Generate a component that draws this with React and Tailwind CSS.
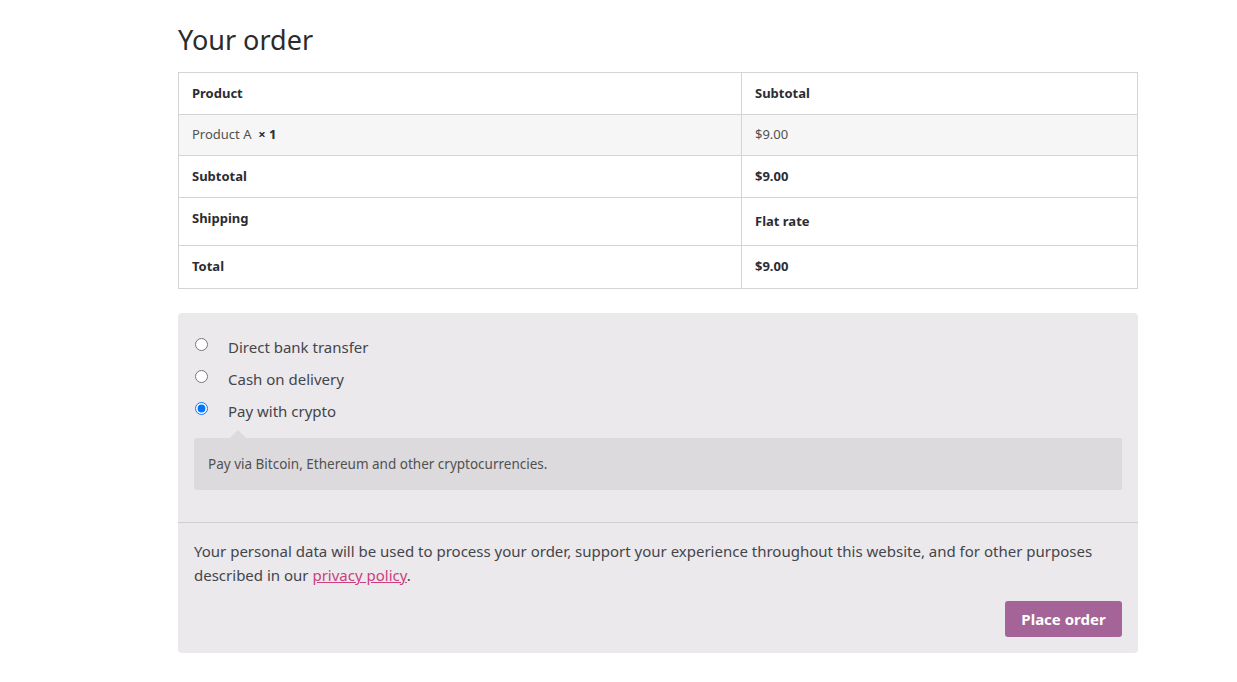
import { useState } from "react";

const rows = [
  { label: "Subtotal", value: "$9.00", h: "h-[42px]" },
  { label: "Shipping", value: "Flat rate", h: "h-[48px]", top: true },
  { label: "Total", value: "$9.00", h: "h-[43px]" },
];

const methods = ["Direct bank transfer", "Cash on delivery", "Pay with crypto"];

const App = () => {
  const [method, setMethod] = useState(2);

  return (
    <div className="min-h-screen bg-white text-[#43454b]" style={{ fontFamily: '"Noto Sans", "Open Sans", sans-serif' }}>
      <div className="w-[960px] ml-[178px] pt-[22px]">
        <h3 className="text-[27px] leading-[36px] text-[#2b2b2b] mb-[14px]">Your order</h3>

        {/* order table */}
        <table className="w-full border-collapse border border-[#d0d0d0] text-[13px] text-[#2c2d33]">
          <thead>
            <tr className="h-[42px]">
              <th className="w-[563px] text-left font-bold px-[13px] border border-[#d4d4d4]">Product</th>
              <th className="text-left font-bold px-[13px] border border-[#d4d4d4]">Subtotal</th>
            </tr>
          </thead>
          <tbody>
            <tr className="h-[41px] bg-[#f6f6f6] text-[#515151]">
              <td className="px-[13px] border border-[#d4d4d4]">
                Product A&nbsp; <strong className="text-[#2c2d33]">× 1</strong>
              </td>
              <td className="px-[13px] border border-[#d4d4d4]">$9.00</td>
            </tr>
          </tbody>
          <tfoot>
            {rows.map((r) => (
              <tr key={r.label} className={r.h}>
                <th className={r.top ? "text-left font-bold px-[13px] pt-[11px] align-top border border-[#d4d4d4]" : "text-left font-bold px-[13px] border border-[#d4d4d4]"}>
                  {r.label}
                </th>
                <td className="font-bold px-[13px] border border-[#d4d4d4]">{r.value}</td>
              </tr>
            ))}
          </tfoot>
        </table>

        {/* payment box */}
        <div className="mt-[24px] bg-[#ebe9eb] rounded-[4px]">
          <ul className="pt-[18px] px-[16px] pb-[32px] border-b border-[#d3ced2]">
            {methods.map((m, i) => (
              <li key={m}>
                <label className="flex items-center h-[32px] text-[15px] cursor-pointer">
                  <input
                    type="radio"
                    name="payment"
                    checked={method === i}
                    onChange={() => setMethod(i)}
                    className="w-[13px] h-[13px] ml-[1px] mr-[20px] -mt-[6px]"
                  />
                  {m}
                </label>
                {method === i && i === 2 && (
                  <div className="relative mt-[11px] bg-[#dcdadc] rounded-[2px] h-[52px] flex items-center px-[14px] text-[13.5px] text-[#515151]">
                    <span className="absolute -top-[8px] left-[36px] w-0 h-0 border-x-[8px] border-x-transparent border-b-[8px] border-b-[#dcdadc]" />
                    Pay via Bitcoin, Ethereum and other cryptocurrencies.
                  </div>
                )}
              </li>
            ))}
          </ul>

          <div className="px-[16px] pt-[16px] pb-[16px]">
            <p className="text-[15px] leading-[24px] text-[#43454b]">
              Your personal data will be used to process your order, support your experience throughout this website, and for other purposes described in our{" "}
              <a href="#" className="text-[#cc3f7f] underline">privacy policy</a>.
            </p>
            <div className="flex justify-end mt-[14px]">
              <button type="submit" className="bg-[#a46497] text-white font-bold text-[15px] w-[117px] h-[36px] rounded-[3px]">
                Place order
              </button>
            </div>
          </div>
        </div>
      </div>
    </div>
  );
};

export default App;
